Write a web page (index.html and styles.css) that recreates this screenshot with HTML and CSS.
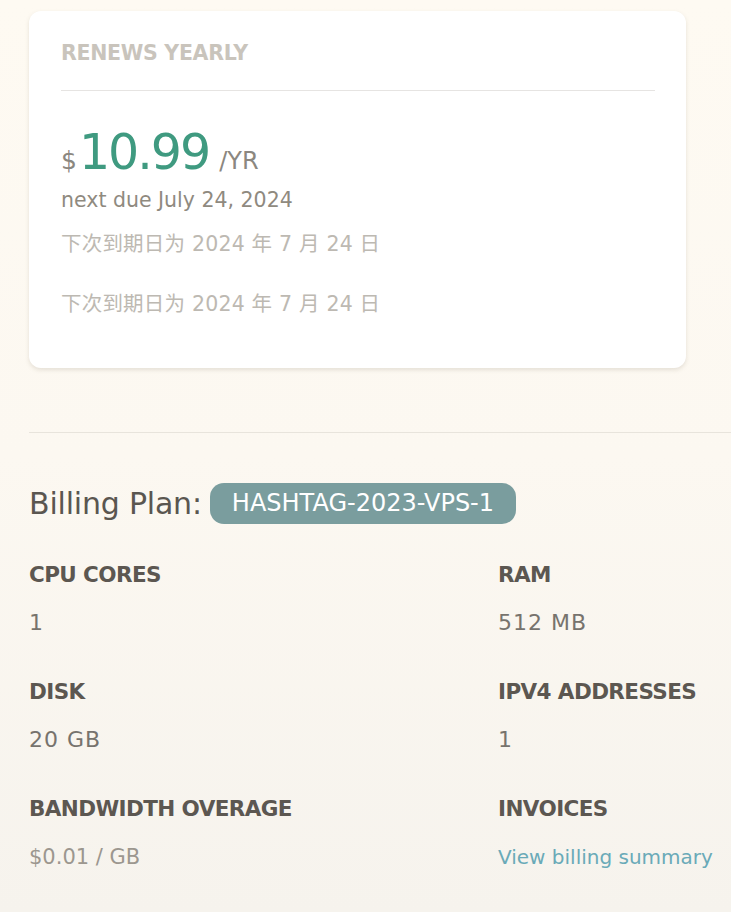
FILE: index.html
```html
<!DOCTYPE html>
<html>
<head>
<meta charset="utf-8">
<link rel="stylesheet" href="styles.css">
</head>
<body>
<div class="page">
  <section class="card">
    <h3 class="card-title">RENEWS YEARLY</h3>
    <div class="price">
      <span class="currency">$</span><span class="amount">10.99</span><span class="period">/YR</span>
    </div>
    <p class="due">next due July 24, 2024</p>
    <p class="due-cn">下次到期日为 2024 年 7 月 24 日</p>
    <p class="due-cn second">下次到期日为 2024 年 7 月 24 日</p>
  </section>

  <hr class="divider">

  <div class="plan">
    <span class="plan-label">Billing Plan:</span>
    <span class="badge">HASHTAG-2023-VPS-1</span>
  </div>

  <div class="specs">
    <div class="spec">
      <div class="spec-label">CPU CORES</div>
      <div class="spec-value">1</div>
    </div>
    <div class="spec">
      <div class="spec-label">RAM</div>
      <div class="spec-value">512 MB</div>
    </div>
    <div class="spec">
      <div class="spec-label">DISK</div>
      <div class="spec-value">20 GB</div>
    </div>
    <div class="spec">
      <div class="spec-label">IPV4 ADDRESSES</div>
      <div class="spec-value">1</div>
    </div>
    <div class="spec">
      <div class="spec-label">BANDWIDTH OVERAGE</div>
      <div class="spec-value light">$0.01 / GB</div>
    </div>
    <div class="spec">
      <div class="spec-label">INVOICES</div>
      <div class="spec-value"><a class="link" href="#">View billing summary</a></div>
    </div>
  </div>
</div>
</body>
</html>
```
FILE: styles.css
```css
html, body {
  margin: 0;
  padding: 0;
}
body {
  min-height: 912px;
  background: linear-gradient(#fefaf2 0%, #fcf8f1 50%, #f6f3ed 100%);
  font-family: "DejaVu Sans", "Noto Sans CJK SC", sans-serif;
  overflow: hidden;
}
.page {
  padding: 11px 0 0 29px;
}
.card {
  width: 657px;
  box-sizing: border-box;
  background: #fff;
  border-radius: 12px;
  box-shadow: 0 2px 4px rgba(120, 110, 90, 0.18);
  padding: 30px 31px 0 32px;
  height: 357px;
}
.card-title {
  margin: 0;
  font-size: 20.5px;
  line-height: 24px;
  font-weight: bold;
  color: #c9c4bc;
  letter-spacing: -0.3px;
  padding-bottom: 25px;
  border-bottom: 1px solid #e6e4e2;
}
.price {
  margin-top: 33px;
  display: flex;
  align-items: baseline;
  height: 50px;
}
.currency {
  font-size: 25px;
  color: #8b8780;
}
.amount {
  font-size: 49px;
  color: #3f9a80;
  margin-left: 2px;
  letter-spacing: -2px;
}
.period {
  font-size: 24px;
  color: #8b8780;
  margin-left: 10px;
}
.due {
  margin: 14px 0 0;
  font-size: 20.5px;
  line-height: 24px;
  color: #8f8a7f;
}
.due-cn {
  margin: 19px 0 0;
  font-size: 20.5px;
  line-height: 26px;
  color: #bdb9b2;
  letter-spacing: 0.2px;
}
.due-cn.second {
  margin-top: 34px;
}
.divider {
  margin: 64px 0 0;
  border: 0;
  border-top: 1px solid #e8e4dc;
}
.plan {
  margin-top: 50px;
  display: flex;
  align-items: center;
  gap: 8px;
}
.plan-label {
  font-size: 30px;
  color: #5a5650;
  letter-spacing: -0.2px;
}
.badge {
  background: #7a9d9e;
  color: #fff;
  font-size: 24px;
  line-height: 28px;
  border-radius: 14px;
  padding: 6px 22px 7px;
}
.specs {
  margin-top: 39px;
  display: grid;
  grid-template-columns: 469px 1fr;
  row-gap: 44px;
}
.spec-label {
  font-size: 21.5px;
  line-height: 24px;
  font-weight: bold;
  color: #5c5751;
  letter-spacing: -0.6px;
}
.spec-value {
  margin-top: 23px;
  font-size: 22px;
  line-height: 26px;
  color: #77736d;
  letter-spacing: 1px;
}
.spec-value.light {
  color: #9c978f;
  font-size: 21px;
  letter-spacing: 0;
}
.link {
  color: #6aaab8;
  text-decoration: none;
  font-size: 20px;
  letter-spacing: 0;
}
```
